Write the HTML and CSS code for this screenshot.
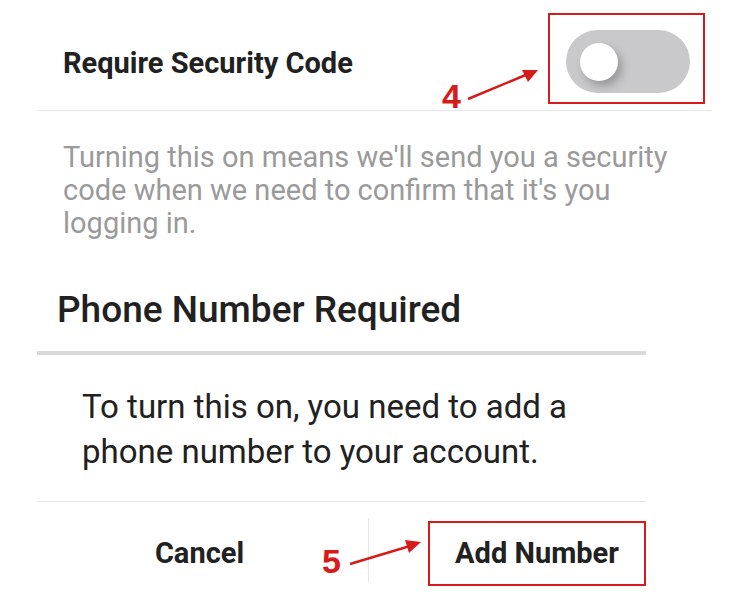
FILE: index.html
```html
<!DOCTYPE html>
<html lang="en">
<head>
  <meta charset="UTF-8">
  <meta name="viewport" content="width=device-width, initial-scale=1.0">
  <title>Require Security Code</title>
  <link rel="stylesheet" href="styles.css">
</head>
<body>

  <!-- Setting row with toggle -->
  <div class="setting-row">
    <h2 class="setting-title">Require Security Code</h2>
    <div class="highlight toggle-box">
      <div class="toggle"><span class="knob"></span></div>
    </div>
  </div>

  <p class="setting-desc">Turning this on means we'll send you a security code when we need to confirm that it's you logging in.</p>

  <!-- Dialog -->
  <section class="dialog">
    <h3 class="dialog-title">Phone Number Required</h3>
    <p class="dialog-body">To turn this on, you need to add a phone number to your account.</p>
    <div class="dialog-actions">
      <div class="action-cell cancel-cell">
        <button class="action-btn">Cancel</button>
      </div>
      <div class="action-cell add-cell">
        <button class="action-btn highlight add-btn">Add Number</button>
      </div>
    </div>
  </section>

  <!-- Annotations -->
  <div class="step step-4">4</div>
  <svg class="arrow arrow-4" width="80" height="40" viewBox="0 0 80 40">
    <line x1="2" y1="35" x2="62" y2="10" stroke="#d71a1a" stroke-width="2.5"/>
    <polygon points="72,6 56,6 62,18" fill="#d71a1a"/>
  </svg>

  <div class="step step-5">5</div>
  <svg class="arrow arrow-5" width="80" height="30" viewBox="0 0 80 30">
    <line x1="2" y1="26" x2="62" y2="8" stroke="#d71a1a" stroke-width="2.5"/>
    <polygon points="73,4 57,2 61,15" fill="#d71a1a"/>
  </svg>

</body>
</html>
```

FILE: styles.css
```css
/* Variables */
:root {
  --text-dark: #212121;
  --text-muted: #9a9a9a;
  --line-light: #e6e6e6;
  --line-thick: #d9d9d9;
  --mark-red: #d71a1a;
}

/* General */
body {
  margin: 0;
  width: 750px;
  height: 600px;
  overflow: hidden;
  position: relative;
  background: #fff;
  font-family: Roboto, 'Liberation Sans', sans-serif;
  color: var(--text-dark);
}

.highlight {
  border: 2px solid var(--mark-red);
}

/* Setting row */
.setting-row {
  display: flex;
  align-items: flex-start;
  justify-content: space-between;
  margin-left: 37px;
  width: 675px;
  box-sizing: border-box;
  padding: 13px 7px 6px 26px;
  border-bottom: 1px solid var(--line-light);
}

.setting-title {
  margin: 33px 0 0;
  font-size: 29px;
  line-height: 34px;
  font-weight: 700;
  color: var(--text-dark);
}

.toggle-box {
  padding: 15px 13px 9px 16px;
}

.toggle {
  width: 124px;
  height: 63px;
  border-radius: 32px;
  background: #c9c9cb;
  display: flex;
  align-items: center;
}

.knob {
  width: 38px;
  height: 38px;
  margin-left: 14px;
  border-radius: 50%;
  background: #fff;
  box-shadow: 4px 5px 8px rgba(0, 0, 0, 0.25);
}

.setting-desc {
  margin: 30px 0 0 63px;
  width: 625px;
  font-size: 29px;
  line-height: 33px;
  color: var(--text-muted);
}

/* Dialog */
.dialog {
  margin: 48px 0 0 37px;
  width: 609px;
}

.dialog-title {
  margin: 0;
  padding: 0 0 19px 20px;
  font-size: 37px;
  font-weight: 500;
  line-height: 44px;
  border-bottom: 4px solid var(--line-thick);
}

.dialog-body {
  margin: 0;
  padding: 29px 34px 27px 45px;
  font-size: 33px;
  line-height: 45px;
  border-bottom: 1px solid var(--line-light);
}

.dialog-actions {
  display: flex;
  align-items: flex-start;
  padding-top: 16px;
}

.action-cell {
  display: flex;
  align-items: center;
  height: 64px;
}

.cancel-cell {
  width: 332px;
  justify-content: center;
  border-right: 1px solid var(--line-light);
}

.add-cell {
  flex: 1;
  padding-left: 59px;
  margin-top: 3px;
}

.action-btn {
  background: none;
  border: none;
  padding: 0;
  font-family: inherit;
  font-size: 29px;
  line-height: 34px;
  font-weight: 700;
  color: var(--text-dark);
  cursor: pointer;
}

.cancel-cell .action-btn {
  margin: 6px 6px 0 0;
}

.add-btn {
  width: 218px;
  height: 65px;
  border: 2px solid var(--mark-red);
}

/* Annotations */
.step {
  position: absolute;
  font-family: 'Liberation Sans', Arial, sans-serif;
  font-size: 34px;
  font-weight: 700;
  color: var(--mark-red);
  line-height: 1;
}

.step-4 {
  left: 442px;
  top: 79px;
}

.step-5 {
  left: 322px;
  top: 544px;
}

.arrow {
  position: absolute;
}

.arrow-4 {
  left: 466px;
  top: 64px;
}

.arrow-5 {
  left: 348px;
  top: 538px;
}
```
